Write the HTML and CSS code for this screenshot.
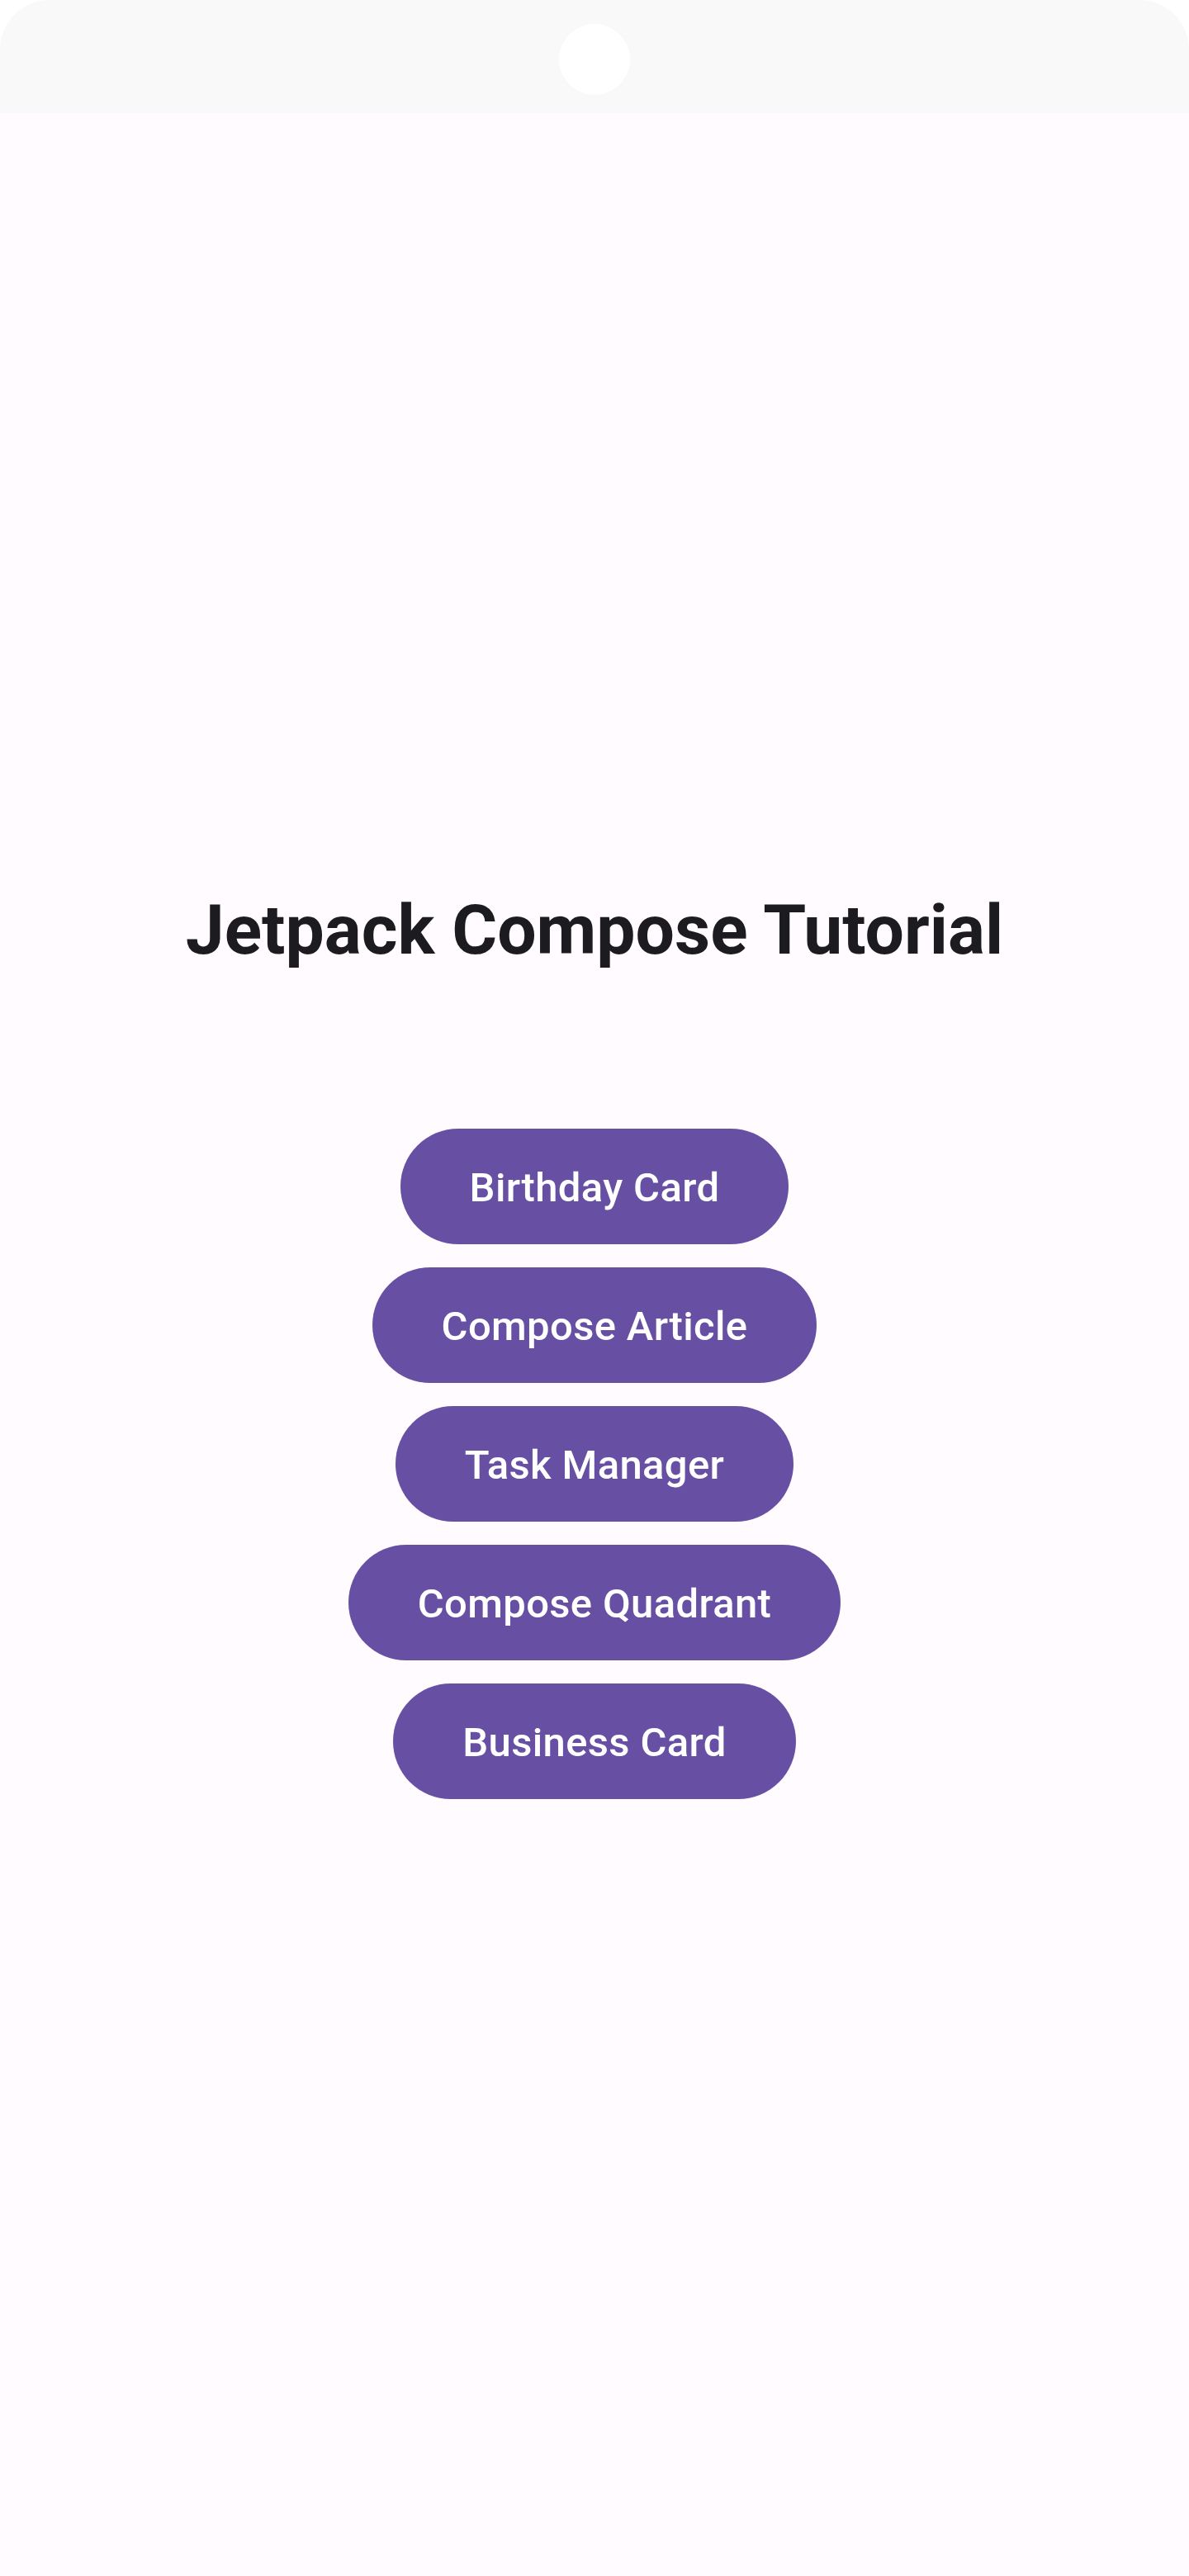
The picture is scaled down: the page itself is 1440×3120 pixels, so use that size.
FILE: index.html
```html
<!DOCTYPE html>
<html lang="en">
<head>
<meta charset="utf-8">
<title>Jetpack Compose Tutorial</title>
<link rel="stylesheet" href="styles.css">
</head>
<body>
<div class="device">
  <div class="status-bar">
    <div class="camera"></div>
  </div>
  <main class="app">
    <h1 class="title">Jetpack Compose Tutorial</h1>
    <div class="buttons">
      <button class="btn">Birthday Card</button>
      <button class="btn">Compose Article</button>
      <button class="btn">Task Manager</button>
      <button class="btn">Compose Quadrant</button>
      <button class="btn">Business Card</button>
    </div>
  </main>
</div>
</body>
</html>
```

FILE: styles.css
```css
html, body {
  margin: 0;
  padding: 0;
  background: #ffffff;
}

.device {
  width: 1440px;
  height: 3120px;
  display: flex;
  flex-direction: column;
  font-family: Roboto, "Liberation Sans", sans-serif;
}

.status-bar {
  height: 137px;
  flex: 0 0 137px;
  background: #f9f9f9;
  border-radius: 60px 60px 0 0;
  display: flex;
  justify-content: center;
  align-items: flex-start;
}

.camera {
  width: 86px;
  height: 86px;
  margin-top: 29px;
  border-radius: 50%;
  background: #ffffff;
}

.app {
  flex: 1 1 auto;
  background: #fffbfe;
  display: flex;
  flex-direction: column;
  align-items: center;
  justify-content: center;
}

.title {
  margin: 0 0 191px 0;
  font-size: 84px;
  line-height: 98px;
  font-weight: 700;
  color: #1c1b1f;
  letter-spacing: 0;
}

.buttons {
  display: flex;
  flex-direction: column;
  align-items: center;
  gap: 28px;
}

.btn {
  height: 140px;
  padding: 2px 84px 0;
  border: none;
  border-radius: 70px;
  background: #6750a4;
  color: #ffffff;
  font-family: Roboto, "Liberation Sans", sans-serif;
  font-size: 49px;
  font-weight: 500;
  letter-spacing: 0.35px;
  line-height: 57px;
  cursor: pointer;
}
```
